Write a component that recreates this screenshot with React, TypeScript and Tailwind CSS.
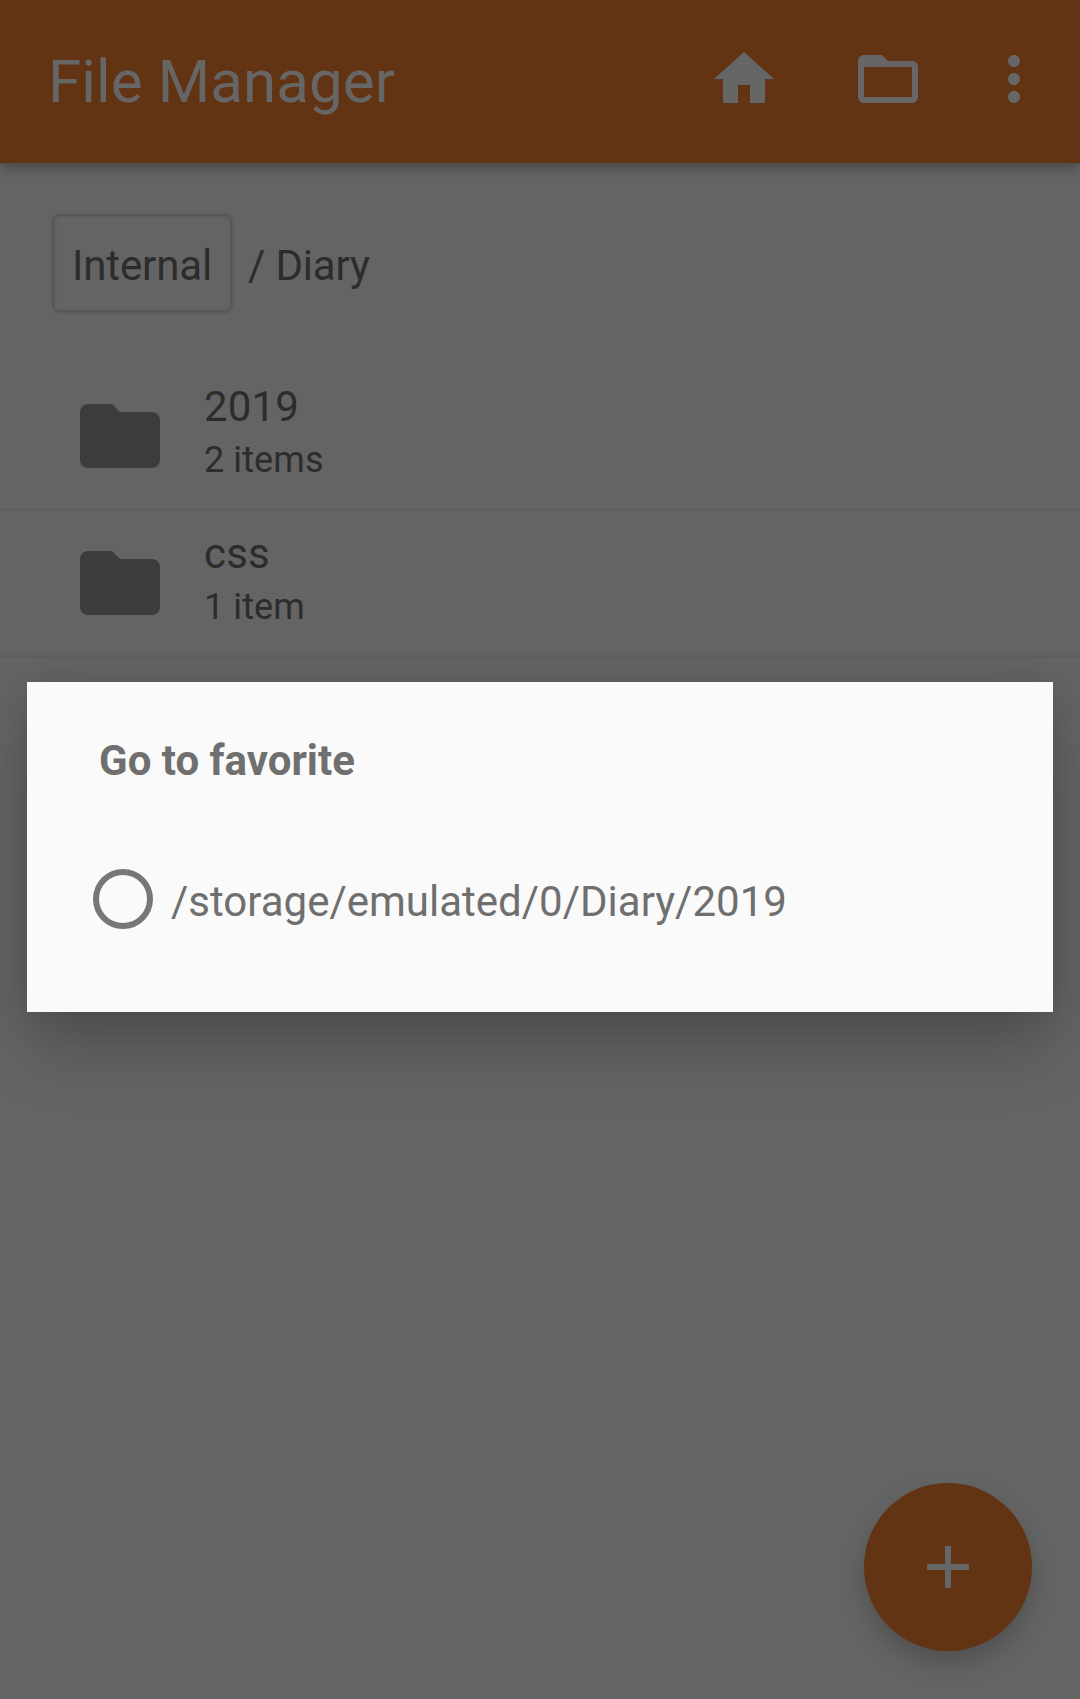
import React from "react";

const folders = [
  { name: "2019", count: "2 items" },
  { name: "css", count: "1 item" },
];

function Icon({ d, className }: { d: string; className: string }) {
  return (
    <svg viewBox="0 0 24 24" fill="currentColor" className={className}>
      <path d={d} />
    </svg>
  );
}

const HOME = "M10 20v-6h4v6h5v-8h3L12 3 2 12h3v8z";
const FOLDER_OUTLINE =
  "M20 6h-8l-2-2H4c-1.100 0-1.990.9-1.990 2L2 18c0 1.100.9 2 2 2h16c1.100 0 2-.9 2-2V8c0-1.100-.9-2-2-2zm0 12H4V8h16v10z";
const FOLDER =
  "M10 4H4c-1.100 0-1.990.9-1.990 2L2 18c0 1.100.9 2 2 2h16c1.100 0 2-.9 2-2V8c0-1.100-.9-2-2-2h-8l-2-2z";
const MORE =
  "M12 8c1.100 0 2-.9 2-2s-.9-2-2-2-2 .9-2 2 .9 2 2 2zm0 2c-1.100 0-2 .9-2 2s.9 2 2 2 2-.9 2-2-.9-2-2-2zm0 6c-1.100 0-2 .9-2 2s.9 2 2 2 2-.9 2-2-.9-2-2-2z";
const PLUS = "M19 13h-6v6h-2v-6H5v-2h6V5h2v6h6v2z";

export default function App() {
  return (
    <div className="relative h-[1699px] w-[1080px] overflow-hidden bg-[#646464] font-['Roboto',sans-serif] text-[#2c2c2c]">
      <header className="flex h-[163px] items-start bg-[#623413] pl-[48px] pr-[30px] text-[#666666] shadow-[0_4px_12px_rgba(0,0,0,0.32)]">
        <h1 className="mt-[46px] flex-1 whitespace-nowrap text-[60px] leading-[72px] tracking-[0.13px]">File Manager</h1>
        <div className="mt-[43px] flex">
          <Icon d={HOME} className="mr-[72px] size-[72px]" />
          <Icon d={FOLDER_OUTLINE} className="mr-[54px] size-[72px]" />
          <Icon d={MORE} className="size-[72px]" />
        </div>
      </header>

      <nav className="flex h-[201px] items-start pl-[53px] pt-[52px] text-[42px] leading-[50px] tracking-[-0.13px]">
        <span className="flex h-[97px] w-[179px] justify-center rounded-[7px] border border-[#545454] pr-px pt-[25px] shadow-[0_0_2px_1px_#575757,inset_0_0_2px_1px_#5b5b5b]">
          Internal
        </span>
        <span className="ml-[16px] whitespace-pre pt-[26px] tracking-[-0.18px]">/ Diary</span>
      </nav>

      <ul>
        {folders.map((f) => (
          <li key={f.name} className="flex h-[147px] items-start border-b-[3px] border-[#5f5f5f] pl-[72px] pt-[18px]">
            <Icon d={FOLDER} className="mt-[6px] size-[96px] text-[#3c3c3c]" />
            <div className="ml-[36px]">
              <div className="text-[42px] leading-[50px] tracking-[0.15px]">{f.name}</div>
              <div className="mt-px text-[36px] leading-[54px] tracking-[0.1px]">{f.count}</div>
            </div>
          </li>
        ))}
      </ul>

      <button className="absolute bottom-[48px] right-[48px] flex size-[168px] items-center justify-center rounded-full bg-[#623413] text-[#666666] shadow-[0_12px_24px_rgba(0,0,0,0.2)]">
        <Icon d={PLUS} className="size-[72px]" />
      </button>

      <div
        role="dialog"
        className="absolute left-[27px] top-[682px] h-[330px] w-[1026px] bg-[#fafafa] pl-[66px] pt-[54px] text-[42px] text-[#6f6f6f] shadow-[0_42px_60px_-4px_rgba(0,0,0,0.19),0_0_36px_rgba(0,0,0,0.12)]"
      >
        <h2 className="pl-[6px] font-bold leading-[50px]">Go to favorite</h2>
        <label className="mt-[83px] flex h-[60px] items-center">
          <span className="size-[60px] rounded-full border-[6px] border-[#777777]" />
          <span className="ml-[18px] pt-[6px] leading-[50px]">/storage/emulated/0/Diary/2019</span>
        </label>
      </div>
    </div>
  );
}
